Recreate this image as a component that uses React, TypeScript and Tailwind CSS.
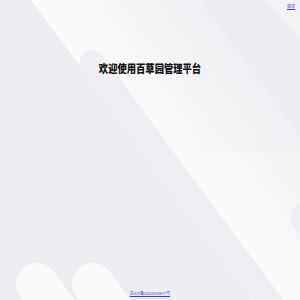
import React from "react";

const Backdrop = () => (
  <svg
    className="absolute inset-0 h-full w-full"
    viewBox="0 0 300 300"
    preserveAspectRatio="none"
  >
    <defs>
      <linearGradient id="band" gradientUnits="userSpaceOnUse" x1="60" y1="40" x2="190" y2="-56">
        <stop offset="0" stopColor="#fbfbfc" />
        <stop offset="0.55" stopColor="#f3f3f6" />
        <stop offset="1" stopColor="#efeff3" />
      </linearGradient>
      <linearGradient id="band2" gradientUnits="userSpaceOnUse" x1="180" y1="150" x2="310" y2="54">
        <stop offset="0" stopColor="#fafafb" />
        <stop offset="0.6" stopColor="#f2f2f5" />
        <stop offset="1" stopColor="#efeff3" />
      </linearGradient>
    </defs>
    <rect width="300" height="300" fill="#eeeef2" />
    <polygon points="31,0 200,0 422,300 253,300" fill="url(#band)" />
    <polygon points="170,150 330,150 440,300 280,300" fill="url(#band2)" opacity="0.9" />
    <polygon points="265,0 300,0 300,40" fill="#f3f3f6" />
    <line x1="92" y1="62" x2="400" y2="478" stroke="#eeeef3" strokeWidth="24" strokeLinecap="round" />
    <line x1="308" y1="218" x2="420" y2="370" stroke="#efeff3" strokeWidth="34" strokeLinecap="round" />
    <line x1="37" y1="284" x2="111" y2="384" stroke="#f9f9fa" strokeWidth="42" strokeLinecap="round" />
    <line x1="93" y1="284" x2="167" y2="384" stroke="#f9f9fa" strokeWidth="42" strokeLinecap="round" />
  </svg>
);

export default function App() {
  return (
    <div
      className="relative flex h-screen w-full flex-col overflow-hidden"
      style={{ fontFamily: '"Noto Sans CJK SC", "Noto Sans", sans-serif' }}
    >
      <Backdrop />
      <div className="relative flex justify-end px-[5px] pt-[3px]">
        <a className="text-[4px] leading-[6px] text-[#3a3aff] underline">登录</a>
      </div>
      <h1 className="relative mt-[52px] scale-y-[1.2] text-center text-[9.3px] font-black leading-[14px] text-[#111]">
        欢迎使用百草园管理平台
      </h1>
      <div className="flex-1" />
      <div className="relative flex justify-center pb-[4px]">
        <a className="text-[4px] leading-[6px] text-[#3a3aff] underline">苏ICP备2022016677号</a>
      </div>
    </div>
  );
}
